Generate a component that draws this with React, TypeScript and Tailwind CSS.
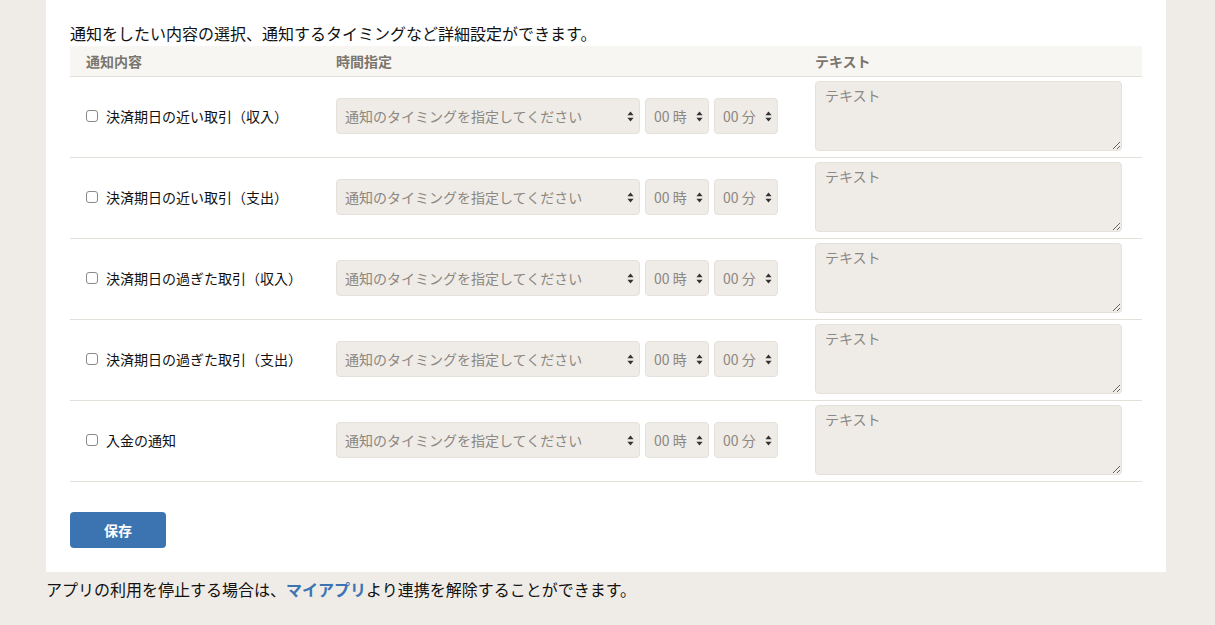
import React from "react";

const rows = [
  "決済期日の近い取引（収入）",
  "決済期日の近い取引（支出）",
  "決済期日の過ぎた取引（収入）",
  "決済期日の過ぎた取引（支出）",
  "入金の通知",
];

const font = { fontFamily: '"Noto Sans CJK JP", "Noto Sans", sans-serif' };

function Arrows() {
  return (
    <svg width="7" height="11" viewBox="0 0 7 11" className="shrink-0">
      <path d="M3.5 0.5 L6.6 4.3 L0.4 4.3 Z" fill="#333" />
      <path d="M3.5 10.5 L6.6 6.7 L0.4 6.7 Z" fill="#333" />
    </svg>
  );
}

function Sel({ w, text }: { w: string; text: string }) {
  return (
    <div
      className={`${w} h-[36px] flex items-center justify-between pl-[8px] pr-[5px] rounded-[4px] border border-[#e4e0da] bg-[#efece8] text-[14px] text-[#8c8780]`}
    >
      <span>{text}</span>
      <Arrows />
    </div>
  );
}

export default function App() {
  return (
    <div className="min-h-[625px] w-full bg-[#efece8] text-[#222]" style={font}>
      <div className="ml-[46px] w-[1120px] bg-white pt-[20px] pb-[24px] px-[24px]">
        <p className="text-[16px] leading-[26px] text-[#111]">
          通知をしたい内容の選択、通知するタイミングなど詳細設定ができます。
        </p>
        <div className="grid grid-cols-[266px_479px_1fr] bg-[#f7f6f3] border-b border-[#e3e0d9] h-[31px] items-center text-[14px] font-bold text-[#7b766d]">
          <div className="pl-[16px]">通知内容</div>
          <div>時間指定</div>
          <div>テキスト</div>
        </div>
        {rows.map((r) => (
          <div
            key={r}
            className="grid grid-cols-[266px_479px_1fr] border-b border-[#e3e0d9] pt-[4px] pb-[6px] items-center"
          >
            <label className="pl-[16px] flex items-center gap-[8px] text-[14px] text-[#111]">
              <span className="w-[12px] h-[12px] rounded-[3px] border border-[#8a8a8a] bg-white inline-block" />
              {r}
            </label>
            <div className="flex items-center gap-[5px]">
              <Sel w="w-[304px]" text="通知のタイミングを指定してください" />
              <Sel w="w-[64px]" text="00 時" />
              <Sel w="w-[64px]" text="00 分" />
            </div>
            <div>
              <textarea
                placeholder="テキスト"
                className="block w-[307px] h-[70px] rounded-[4px] border border-[#e4e0da] bg-[#efece8] px-[9px] py-[3px] text-[14px] placeholder:text-[#8c8780] resize-y"
                style={font}
              />
            </div>
          </div>
        ))}
        <button className="mt-[30px] w-[96px] h-[36px] rounded-[4px] bg-[#3c74b1] text-white text-[14px] font-bold">
          保存
        </button>
      </div>
      <p className="ml-[46px] mt-[5px] text-[16px] leading-[24px] text-[#111]">
        アプリの利用を停止する場合は、
        <span className="text-[#3c74b1] font-bold">マイアプリ</span>
        より連携を解除することができます。
      </p>
    </div>
  );
}
